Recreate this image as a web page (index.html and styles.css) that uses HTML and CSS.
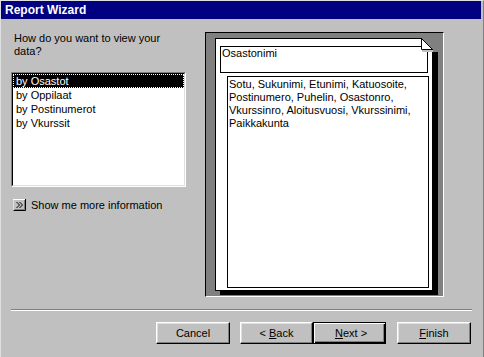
FILE: index.html
```html
<!DOCTYPE html>
<html lang="en">
<head>
  <meta charset="UTF-8" />
  <title>Report Wizard</title>
  <link rel="stylesheet" href="styles.css">
</head>
<body>
  <div class="window">
    <div class="titlebar">Report Wizard</div>

    <div class="main">
      <div class="left">
        <p class="question">How do you want to view your data?</p>

        <div class="listbox">
          <ul class="list">
            <li class="selected">by Osastot</li>
            <li>by Oppilaat</li>
            <li>by Postinumerot</li>
            <li>by Vkurssit</li>
          </ul>
        </div>

        <div class="more">
          <svg class="more-icon" width="13" height="12" viewBox="0 0 13 12">
            <rect x="0" y="0" width="13" height="12" fill="#c0c0c0"/>
            <path d="M0 11.5V0.5H12.5" stroke="#fff" fill="none"/>
            <path d="M0.5 11.5H12.5V0" stroke="#000" fill="none"/>
            <path d="M1.5 10.5H11.5V1" stroke="#808080" fill="none"/>
            <path d="M3.5 3l3 3-3 3M6.5 3l3 3-3 3" stroke="#000" fill="none"/>
          </svg>
          <span>Show me more information</span>
        </div>
      </div>

      <div class="preview">
        <div class="sheet">
          <div class="sheet-header">Osastonimi</div>
          <div class="sheet-body">Sotu, Sukunimi, Etunimi, Katuosoite, Postinumero, Puhelin, Osastonro, Vkurssinro, Aloitusvuosi, Vkurssinimi, Paikkakunta</div>
          <!-- folded corner -->
          <svg class="dogear" width="17" height="16" viewBox="0 0 17 16">
            <rect x="12" y="0" width="5" height="14" fill="#808080"/>
            <polygon points="0,0 12,0 12,12" fill="#808080"/>
            <polygon points="0.5,0.5 0.5,11.5 11.5,11.5" fill="#fff"/>
            <path d="M0.5 0V11.5H12M0.5 0.5L12 12" stroke="#000" fill="none"/>
            <rect x="1" y="12" width="11" height="2" fill="#c0c0c0"/>
          </svg>
        </div>
      </div>
    </div>

    <div class="separator"></div>

    <div class="buttons">
      <button class="btn">Cancel</button>
      <button class="btn btn-back">&lt; <u>B</u>ack</button>
      <button class="btn btn-default">&nbsp;<u>N</u>ext &gt;</button>
      <button class="btn btn-finish"><u>F</u>inish</button>
    </div>
  </div>
</body>
</html>
```

FILE: styles.css
```css
body {
  margin: 0;
  background: #c0c0c0;
  font-family: "Liberation Sans", Arial, sans-serif;
  font-size: 11px;
  color: #000;
}

.window {
  width: 484px;
  height: 357px;
  box-sizing: border-box;
  border-left: 1px solid #dfdfdf;
  border-top: 1px solid #dfdfdf;
  border-right: 1px solid #808080;
  padding-right: 2px;
}

.titlebar {
  height: 18px;
  line-height: 19px;
  padding-left: 4px;
  background: #000080;
  color: white;
  font-size: 12px;
  font-weight: bold;
}

.main {
  display: flex;
  padding-left: 10px;
}

.left {
  width: 175px;
  margin-top: 13px;
}

.question {
  margin: 0;
  padding-left: 3px;
  width: 160px;
  line-height: 13px;
}

.listbox {
  margin-top: 14px;
  height: 115px;
  box-sizing: border-box;
  border: 1px solid;
  border-color: #808080 #fff #fff #808080;
}

.list {
  list-style: none;
  margin: 0;
  padding: 0;
  height: 100%;
  box-sizing: border-box;
  background: white;
  border: 1px solid;
  border-color: #000 #dfdfdf #dfdfdf #000;
}

.list li {
  height: 14px;
  line-height: 14px;
  padding-left: 3px;
}

.list li.selected {
  background: #000;
  color: white;
  outline: 1px dotted #fff;
  outline-offset: -1px;
}

.more {
  display: flex;
  align-items: center;
  gap: 5px;
  margin-top: 11px;
  padding-left: 2px;
  height: 13px;
}

.more-icon {
  display: block;
}

.preview {
  width: 239px;
  height: 265px;
  box-sizing: border-box;
  margin-top: 13px;
  margin-left: 19px;
  padding: 5px 0 0 9px;
  background: #808080;
  border: 1px solid;
  border-color: #000 #fff #fff #000;
}

.sheet {
  position: relative;
  width: 218px;
  height: 253px;
  box-sizing: border-box;
  background: white;
  border: 1px solid #000;
  box-shadow: 5px 4px 0 #000;
}

.dogear {
  position: absolute;
  top: -1px;
  right: -6px;
}

.sheet-header {
  width: 208px;
  height: 27px;
  box-sizing: border-box;
  margin: 7px 0 0 4px;
  border: 1px solid #000;
  padding-left: 1px;
  line-height: 13px;
}

.sheet-body {
  width: 202px;
  height: 212px;
  box-sizing: border-box;
  margin: 3px 0 0 11px;
  border: 1px solid #000;
  padding: 1px 2px 0 1px;
  line-height: 13px;
}

.separator {
  width: 461px;
  margin: 12px 0 0 10px;
  border-top: 1px solid #808080;
  border-bottom: 1px solid #fff;
}

.buttons {
  display: flex;
  margin: 11px 0 0 155px;
}

.btn {
  width: 73px;
  height: 22px;
  padding: 0;
  background: #c0c0c0;
  font-family: "Liberation Sans", Arial, sans-serif;
  font-size: 11px;
  color: #000;
  border: 1px solid;
  border-color: #fff #000 #000 #fff;
  box-shadow: inset -1px -1px 0 #808080, inset 1px 1px 0 #dfdfdf;
}

.btn:first-child {
  width: 74px;
}

.btn-back {
  margin-left: 10px;
}

.btn-default {
  border-color: #000;
  box-shadow: inset 1px 1px 0 #fff, inset -1px -1px 0 #000, inset -2px -2px 0 #808080;
}

.btn-finish {
  width: 74px;
  margin-left: 11px;
}
```
